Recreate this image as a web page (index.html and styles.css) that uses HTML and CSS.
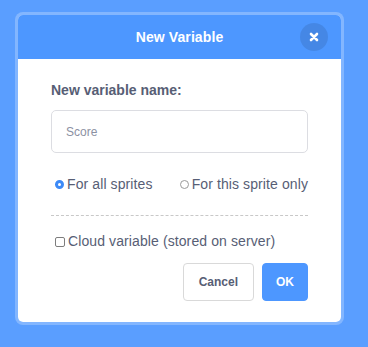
FILE: index.html
```html
<!DOCTYPE html>
<html lang="en">
<head>
<meta charset="UTF-8">
<meta name="viewport" content="width=device-width, initial-scale=1.0">
<title>New Variable</title>
<link rel="stylesheet" href="styles.css">
</head>
<body>
<div class="page">
  <div class="modal">
    <div class="modal-header">
      <div></div>
      <div class="modal-title">New Variable</div>
      <button class="close-button" aria-label="Close">
        <svg width="10" height="10" viewBox="0 0 10 10"><path d="M2 2 L8 8 M8 2 L2 8" stroke="#fff" stroke-width="2.6" stroke-linecap="round"/></svg>
      </button>
    </div>
    <div class="modal-body">
      <label class="field-label" for="varName">New variable name:</label>
      <input class="name-input" id="varName" type="text" placeholder="Score">
      <div class="options-row">
        <label class="option"><input type="radio" name="scope" checked> For all sprites</label>
        <label class="option"><input type="radio" name="scope"> For this sprite only</label>
      </div>
      <div class="divider"></div>
      <label class="option cloud"><input type="checkbox"> Cloud variable (stored on server)</label>
      <div class="button-row">
        <button class="btn btn-cancel">Cancel</button>
        <button class="btn btn-ok">OK</button>
      </div>
    </div>
  </div>
</div>
</body>
</html>
```

FILE: styles.css
```css
body { margin: 0; background-color: #5a9eff; font-family: "Liberation Sans", Arial, sans-serif; color: #575e75; }
.page { padding: 12px 0 0 15px; }
.modal { width: 329px; box-sizing: border-box; border: 3px solid rgba(255,255,255,0.25); border-radius: 8px; background-color: #fff; background-clip: padding-box; overflow: hidden; }
.modal-header { height: 44px; background-color: #4d97ff; display: grid; grid-template-columns: 1fr auto 1fr; align-items: center; color: #fff; }
.modal-title { font-size: 14px; font-weight: bold; letter-spacing: 0.1px; }
.close-button { justify-self: end; margin-right: 13px; width: 28px; height: 28px; border-radius: 50%; border: none; padding: 0; background-color: rgba(0,0,0,0.1); display: flex; align-items: center; justify-content: center; cursor: pointer; }
.close-button svg { display: block; }
.modal-body { padding: 23px 33px 21px; }
.field-label { display: block; font-size: 14px; font-weight: bold; line-height: 16px; margin-bottom: 12px; }
.name-input { display: block; width: 100%; height: 43px; box-sizing: border-box; border: 1px solid #dcdde2; border-radius: 5px; padding: 0 14px; font-family: inherit; font-size: 12px; color: #575e75; outline: none; }
.name-input::placeholder { color: #8c91a3; }
.options-row { display: flex; justify-content: space-between; margin-top: 23px; padding-left: 4px; }
.option { display: flex; align-items: center; font-size: 14px; line-height: 16px; letter-spacing: 0.1px; white-space: nowrap; }
.option input { appearance: none; -webkit-appearance: none; margin: 0 3px 0 0; flex-shrink: 0; }
.option input[type='radio'] { width: 9px; height: 9px; border-radius: 50%; border: 1px solid #9a9a9a; background: #fff; box-sizing: border-box; }
.option input[type='radio']:checked { border: 3px solid #3d8af7; }
.option input[type='checkbox'] { width: 10px; height: 10px; border: 1px solid #7d7d7d; border-radius: 2px; background: #fff; box-sizing: border-box; margin-top: 2px; }
.divider { border-top: 1px dashed #c8c8c8; margin: 23px 0 17px; }
.cloud { padding-left: 4px; }
.button-row { display: flex; justify-content: flex-end; gap: 8px; margin-top: 14px; }
.btn { height: 38px; border-radius: 4px; font-family: inherit; font-size: 12px; font-weight: bold; cursor: pointer; }
.btn-cancel { padding: 0 15px; background: #fff; border: 1px solid #d9d9d9; color: #575e75; }
.btn-ok { padding: 0 13px; background: #4d97ff; border: 1px solid #4d97ff; color: #fff; }
```
